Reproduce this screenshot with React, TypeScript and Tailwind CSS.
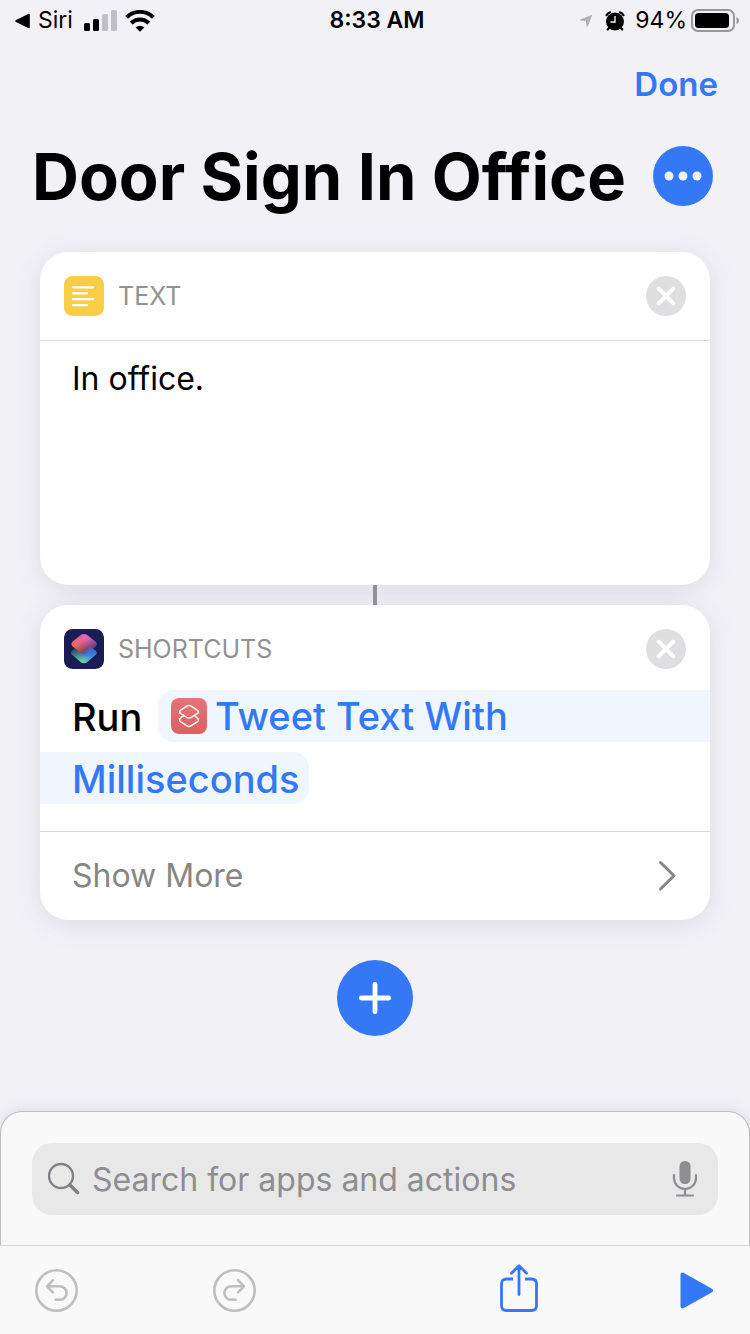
import React from "react";

function SignalIcon() {
  return (
    <svg width="33" height="22" viewBox="0 0 33 22" aria-hidden="true">
      <rect x="0" y="13" width="6" height="8" rx="1.5" fill="#000" />
      <rect x="9" y="9" width="6" height="12" rx="1.5" fill="#000" />
      <rect x="18" y="4" width="6" height="17" rx="1.5" fill="#c0bfc5" />
      <rect x="27" y="0" width="6" height="21" rx="1.5" fill="#c0bfc5" />
    </svg>
  );
}

function WifiIcon() {
  return (
    <svg width="30" height="22" viewBox="0 0 30 22" fill="none" stroke="#000" strokeWidth="4" aria-hidden="true">
      <path d="M1.6 7.4a19 19 0 0 1 26.8 0" />
      <path d="M6.2 13.1a12.4 12.4 0 0 1 17.6 0" />
      <path d="M15 21.8l-4.3-4.4a6.1 6.1 0 0 1 8.6 0z" fill="#000" stroke="none" />
    </svg>
  );
}

function AlarmIcon() {
  return (
    <svg width="20" height="20" viewBox="0 0 20 20" aria-hidden="true">
      <g stroke="#000" strokeWidth="2.2" strokeLinecap="round" fill="none">
        <path d="M1.5 4.2Q2.6 1.8 5.2 1.3M18.5 4.2Q17.4 1.8 14.8 1.3" />
        <path d="M4.4 16.5l-1.6 2M15.6 16.5l1.6 2" />
      </g>
      <circle cx="10" cy="10.5" r="9" fill="#000" />
      <path d="M10 5v6H5.4" fill="none" stroke="#f2f1f6" strokeWidth="1.4" />
    </svg>
  );
}

function BatteryIcon() {
  return (
    <svg width="48" height="24" viewBox="0 0 48 24" aria-hidden="true">
      <rect x="1" y="1" width="42" height="21" rx="6" fill="none" stroke="#98979b" strokeWidth="2" />
      <rect x="4" y="4" width="34" height="15" rx="3.5" fill="#000" />
      <path d="M45.5 8q2.5 1 2.5 3.5T45.5 15z" fill="#98979b" />
    </svg>
  );
}

function StatusBar() {
  return (
    <header className="grid h-[41px] grid-cols-[1fr_auto_1fr] items-center pl-[15px] pr-[11px] text-[23px] text-black">
      <div className="flex items-center">
        <svg width="15" height="16" viewBox="0 0 15 16" aria-hidden="true">
          <path d="M1 8L14 1.5v13z" stroke="#000" strokeWidth="1.6" strokeLinejoin="round" />
        </svg>
        <a href="#siri" className="ml-2 mr-[11px]">Siri</a>
        <SignalIcon />
        <span className="ml-2"><WifiIcon /></span>
      </div>
      <time className="font-semibold">8:33 AM</time>
      <div className="flex items-center justify-end">
        <svg width="12" height="12" viewBox="0 0 12 12" className="mr-[13px]" aria-hidden="true">
          <path d="M11.5.5L7.2 11.5 6.3 5.7.5 5z" fill="#b2b1b6" stroke="#b2b1b6" strokeLinejoin="round" />
        </svg>
        <AlarmIcon />
        <span className="ml-2.5 mr-1">94%</span>
        <BatteryIcon />
      </div>
    </header>
  );
}

function RemoveButton({ label }: { label: string }) {
  return (
    <button aria-label={label} className="ml-auto size-10 rounded-full bg-[#dfdfe1]">
      <svg viewBox="0 0 40 40" aria-hidden="true">
        <path d="M12.7 12.7l14.6 14.6M27.3 12.7L12.7 27.3" stroke="#fff" strokeWidth="4" strokeLinecap="round" />
      </svg>
    </button>
  );
}

function TextIcon() {
  return (
    <svg width="40" height="40" viewBox="0 0 40 40" aria-hidden="true">
      <rect width="40" height="40" rx="8.5" fill="#f7ce46" />
      <path d="M9 11.3h20M9 17.3h14M9 23.1h20M9 29.1h14" stroke="#fff" strokeWidth="2.2" strokeLinecap="round" />
    </svg>
  );
}

function ShortcutsIcon() {
  const topTile =
    "M16.5 6.3Q20 3.7 23.5 6.3L31 12.2Q34.2 15 31 17.8L23.5 23.7Q20 26.3 16.500 23.7L9 17.8Q5.800 15 9 12.2z";
  const bottomTile =
    "M16.5 15.3Q20 12.9 23.5 15.3L31 21.2Q34.2 24 31 26.3L23.5 32.9Q20 35.700 16.500 32.900L9 26.300Q5.800 24 9 21.200z";
  return (
    <svg width="40" height="40" viewBox="0 0 40 40" aria-hidden="true">
      <defs>
        <linearGradient id="lower" x1="0.2" y1="0.9" x2="0.9" y2="0.3">
          <stop offset="0" stopColor="#6cdc9c" />
          <stop offset="0.45" stopColor="#54aebf" />
          <stop offset="1" stopColor="#2f74ef" />
        </linearGradient>
        <linearGradient id="shade" x1="0.2" y1="0.3" x2="0.5" y2="0.8">
          <stop offset="0" stopColor="#1c1c55" stopOpacity="0.7" />
          <stop offset="1" stopColor="#1c1c55" stopOpacity="0" />
        </linearGradient>
        <linearGradient id="upper" x1="0.2" y1="0.7" x2="0.7" y2="0.1">
          <stop offset="0" stopColor="#ef664f" />
          <stop offset="0.6" stopColor="#e2669d" />
          <stop offset="1" stopColor="#dd68c8" />
        </linearGradient>
        <linearGradient id="fold" x1="0.5" y1="0.3" x2="0.9" y2="0.8">
          <stop offset="0" stopColor="#1c1c55" stopOpacity="0" />
          <stop offset="1" stopColor="#1c1c55" stopOpacity="0.7" />
        </linearGradient>
        <clipPath id="overlap">
          <path d="M26.8 17.5L34 22v8L16 26z" />
        </clipPath>
      </defs>
      <rect width="40" height="40" rx="8.5" fill="#1c1c55" />
      <path d={bottomTile} fill="url(#lower)" />
      <path d={bottomTile} fill="url(#shade)" />
      <path d={topTile} fill="url(#upper)" />
      <path d={topTile} fill="url(#fold)" />
      <path d={bottomTile} fill="#3577ea" opacity="0.6" clipPath="url(#overlap)" />
    </svg>
  );
}

function TweetIcon() {
  return (
    <svg width="36" height="36" viewBox="0 0 36 36" className="shrink-0" aria-hidden="true">
      <defs>
        <linearGradient id="coral" x1="0" y1="0" x2="0" y2="1">
          <stop offset="0" stopColor="#e37476" />
          <stop offset="1" stopColor="#de6062" />
        </linearGradient>
      </defs>
      <rect width="36" height="36" rx="8" fill="url(#coral)" />
      <g fill="none" stroke="#fff" strokeWidth="1.4" strokeLinejoin="round" strokeLinecap="round">
        <path d="M15.800 8.200Q18 6.800 20.200 8.200L26.200 12.100Q28.800 13.900 26.200 15.700L20.200 19.300Q18 20.600 15.800 19.300L9.800 15.700Q7.200 13.900 9.800 12.100z" />
        <path d="M12.400 17.800L9.800 19.900Q7.200 21.900 9.800 23.900L15.800 27.700Q18 29.200 20.200 27.700L26.200 23.900Q28.800 21.900 26.200 19.900L23.600 17.800" />
      </g>
    </svg>
  );
}

function CardHeader({ icon, title }: { icon: React.ReactNode; title: string }) {
  return (
    <div className="flex items-center px-6">
      {icon}
      <h2 className="ml-3.5 pt-0.5 text-[25px] text-[#929292]">{title}</h2>
      <RemoveButton label={"Remove " + title} />
    </div>
  );
}

const cardClass = "rounded-[28px] bg-white shadow-[0_4px_28px_rgba(60,60,90,0.11)]";

export default function App() {
  return (
    <div className="flex min-h-screen flex-col bg-[#f2f1f6] font-['Inter','Liberation_Sans',sans-serif] text-black">
      <StatusBar />
      <nav className="flex h-[87px] items-center justify-end px-8">
        <button className="text-[33px] font-semibold text-[#3478f6]">Done</button>
      </nav>
      <div className="flex h-24 items-center justify-between pl-8 pr-[37px]">
        <h1 className="whitespace-nowrap text-[65px] font-bold leading-none">Door Sign In Office</h1>
        <button aria-label="Shortcut settings" className="size-[60px] shrink-0 rounded-full bg-[#3478f6]">
          <svg viewBox="0 0 60 60" fill="#f2f1f6" aria-hidden="true">
            <circle cx="16" cy="30" r="4.5" />
            <circle cx="30" cy="30" r="4.5" />
            <circle cx="44" cy="30" r="4.5" />
          </svg>
        </button>
      </div>

      <main className="flex flex-col items-center px-10 pt-7">
        <section className={cardClass + " w-full pt-6"}>
          <CardHeader icon={<TextIcon />} title="TEXT" />
          <textarea
            aria-label="Text"
            defaultValue="In office."
            className="mt-6 block h-[245px] w-full resize-none rounded-b-[28px] border-t border-[#d9d9da] px-8 py-4 text-[32px] leading-[44px] outline-none"
          />
        </section>
        <div className="z-10 h-5 w-1 bg-[#929196]" />
        <section className={cardClass + " w-full pt-6"}>
          <CardHeader icon={<ShortcutsIcon />} title="SHORTCUTS" />
          <div className="mt-[21px] grid grid-cols-[118px_1fr] gap-y-2.5 pb-[27px] text-[38px] font-medium leading-[54px]">
            <span className="h-[52px] pl-8">Run</span>
            <button className="contents text-[#3478f6]">
              <span className="flex h-[52px] items-center gap-2 rounded-l-2xl bg-[#eff6fe] pl-[13px]">
                <TweetIcon />
                Tweet Text With
              </span>
              <span className="col-span-2 h-[52px] justify-self-start rounded-r-2xl bg-[#eff6fe] pl-8 pr-2.5">Milliseconds</span>
            </button>
          </div>
          <button className="flex h-[89px] w-full items-center justify-between border-t border-[#d9d9da] px-8 text-[32px] text-[#868686]">
            Show More
            <svg width="22" height="34" viewBox="0 0 22 34" fill="none" aria-hidden="true">
              <path d="M4.500 3.500L18 16.700 4.500 30" stroke="#868689" strokeWidth="3" strokeLinecap="round" strokeLinejoin="round" />
            </svg>
          </button>
        </section>
        <button aria-label="Add action" className="my-10 size-[76px] rounded-full bg-[#3478f6]">
          <svg viewBox="0 0 76 76" aria-hidden="true">
            <path d="M38 24.300v27.400M24.300 38h27.400" stroke="#fff" strokeWidth="4.8" strokeLinecap="round" />
          </svg>
        </button>
      </main>

      <footer className="mt-auto">
        <div className="rounded-t-[22px] border border-b-0 border-[#bdbdbf] bg-[#f9f9f9] px-[31px] pb-[30px] pt-[31px] shadow-[0_0_16px_rgba(60,60,90,0.12)]">
          <label className="flex h-[72px] items-center rounded-[20px] bg-[#e8e8e8] pl-4 pr-5">
            <svg width="32" height="34" viewBox="0 0 32 34" fill="none" stroke="#808085" aria-hidden="true">
              <circle cx="13" cy="14" r="12" strokeWidth="2.4" />
              <path d="M22 23l7.500 7.500" strokeWidth="3.6" strokeLinecap="round" />
            </svg>
            <input
              type="search"
              aria-label="Search for apps and actions"
              placeholder="Search for apps and actions"
              className="ml-3 min-w-0 flex-1 bg-transparent pt-0.5 text-[32px] outline-none placeholder:text-[#8e8d92]"
            />
            <svg width="26" height="36" viewBox="0 0 26 36" aria-hidden="true">
              <rect x="7.5" y="0" width="11" height="23" rx="5.2" fill="#8e8d92" />
              <path d="M2 14v3a11 11 0 0 0 22 0v-3M13 28v6M5 34.500h16" fill="none" stroke="#8e8d92" strokeWidth="2.2" strokeLinecap="round" />
            </svg>
          </label>
        </div>
        <div className="flex h-[89px] items-center border-t border-[#d5d5d6] bg-[#f9f9f9] pl-[35px] pr-[37px]">
          <button aria-label="Undo">
            <svg width="43" height="43" viewBox="0 0 43 43" fill="none" stroke="#bfbfbf" strokeWidth="2.6" strokeLinecap="round" strokeLinejoin="round">
              <circle cx="21.5" cy="21.5" r="20.2" />
              <path d="M18 11.200l-6 6.100 6 6.100M12 17.300h12.800a6.700 6.700 0 0 1 0 13.500H20.500" />
            </svg>
          </button>
          <span className="flex-[135]" />
          <button aria-label="Redo">
            <svg width="43" height="43" viewBox="0 0 43 43" fill="none" stroke="#bfbfbf" strokeWidth="2.6" strokeLinecap="round" strokeLinejoin="round">
              <circle cx="21.5" cy="21.5" r="20.2" />
              <path d="M25 11.200l6 6.100-6 6.100M31 17.300H18.200a6.700 6.700 0 0 0 0 13.500H22.500" />
            </svg>
          </button>
          <span className="flex-[245]" />
          <button aria-label="Share" className="pb-1">
            <svg width="38" height="48" viewBox="0 0 38 48" fill="none" stroke="#3478f6" strokeWidth="2.8" strokeLinejoin="round">
              <path d="M13 15H6.500q-5 0-5 5v21.500q0 5 5 5h25q5 0 5-5V20q0-5-5-5H25" />
              <path d="M19 30.500V2M11.500 9.200L19 1.800l7.500 7.400" strokeLinecap="round" />
            </svg>
          </button>
          <span className="flex-[142]" />
          <button aria-label="Play">
            <svg width="33" height="37" viewBox="0 0 33 37">
              <path d="M2.500 2.500v32L31 18.500z" fill="#3478f6" stroke="#3478f6" strokeWidth="4" strokeLinejoin="round" />
            </svg>
          </button>
        </div>
      </footer>
    </div>
  );
}
